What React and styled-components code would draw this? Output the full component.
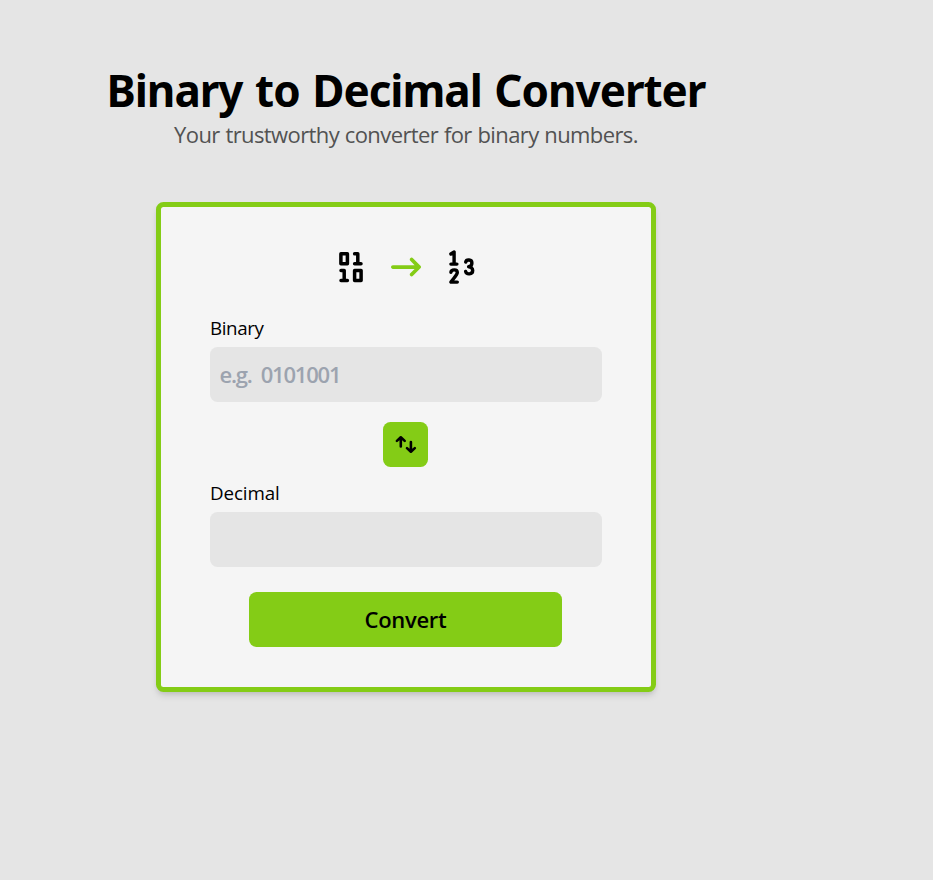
import React from "react";
import styled, { createGlobalStyle } from "styled-components";
import { FaArrowRightLong } from "react-icons/fa6";

const GlobalStyle = createGlobalStyle`
  *, *::before, *::after { box-sizing: border-box; }
  body { margin: 0; background: #e5e5e5; font-family: "Open Sans", "Noto Sans", sans-serif; }
`;

const Page = styled.main`
  width: 812px;
  min-height: 880px;
  padding-top: 63px;
  display: flex;
  flex-direction: column;
  align-items: center;
`;

const Title = styled.h1`
  margin: 0;
  font-family: "Noto Sans", sans-serif;
  font-size: 44px;
  line-height: 54px;
  font-weight: 700;
  letter-spacing: -1.03px;
  word-spacing: 2.2px;
  white-space: nowrap;
  color: #000;
`;

const Subtitle = styled.p`
  margin: 0;
  font-size: 22px;
  line-height: 35px;
  letter-spacing: -0.6px;
  word-spacing: 0.6px;
  white-space: nowrap;
  color: #525252;
`;

const Card = styled.form`
  width: 500px;
  height: 490px;
  margin-top: 50px;
  padding: 35px 50px 0 49px;
  display: flex;
  flex-direction: column;
  align-items: center;
  background: #f5f5f5;
  border: 5px solid #84cc16;
  border-radius: 7.5px;
  box-shadow: 0 5px 7.5px -1px rgba(0, 0, 0, 0.1), 0 2.5px 5px -2px rgba(0, 0, 0, 0.1);
`;

const IconRow = styled.div`
  height: 50px;
  display: flex;
  align-items: center;
  gap: 20px;
  margin-left: 1px;
  color: #000;
`;

const ConversionArrow = styled(FaArrowRightLong)`
  width: 30px;
  height: 30px;
  color: #84cc16;
`;

const Field = styled.div`
  width: 392px;
  display: flex;
  flex-direction: column;
  align-self: flex-start;
  margin-top: ${(p) => p.$top}px;
`;

const Label = styled.label`
  font-size: 18.75px;
  line-height: 30px;
  letter-spacing: ${(p) => p.$tracking}px;
  color: #000;
  margin-bottom: 4px;
`;

const Input = styled.input`
  width: 392px;
  height: 55px;
  padding: 0 9.5px 2px;
  border: 0;
  border-radius: 7.5px;
  outline: none;
  background: #e5e5e5;
  font: 600 22px "Open Sans", sans-serif;
  letter-spacing: -1.2px;
  word-spacing: 4.5px;
  &::placeholder { color: #9ca3af; opacity: 1; }
`;

const Button = styled.button`
  border: 0;
  padding: 0;
  border-radius: 7.5px;
  background: #84cc16;
  color: #000;
  display: flex;
  align-items: center;
  justify-content: center;
`;

const SwapButton = styled(Button)`
  width: 45px;
  height: 45px;
  margin-top: 20px;
`;

const ConvertButton = styled(Button)`
  width: 313px;
  height: 55px;
  margin-top: 25px;
  padding-bottom: 2px;
  font: 600 22px "Open Sans", sans-serif;
  letter-spacing: -0.3px;
`;

const BinaryIcon = () => (
  <svg width="40" height="40" viewBox="331 247 40 40" fill="none" stroke="currentColor" strokeWidth="3.5" strokeLinecap="round" strokeLinejoin="round">
    <rect x="340.9" y="253.8" width="6.5" height="9.9" />
    <path d="M354.6 253.8h3.2v9.9M354.6 263.7h6.4" />
    <path d="M341 270.5h3.2v9.9M341 280.4h6.4" />
    <rect x="354.6" y="270.5" width="6.5" height="9.9" />
  </svg>
);

const NumbersIcon = () => (
  <svg width="40" height="40" viewBox="441 247 40 40" fill="none" stroke="currentColor" strokeWidth="3.4" strokeLinecap="round" strokeLinejoin="round">
    <path d="M450.9 254l3.2-2v12.1M450.9 264.1h6" />
    <path d="M450.9 272.2c.5-3.1 6.4-3.2 6.4.2 0 2-1.5 3.2-6.4 9.7h6.4" />
    <path d="M465.7 262.1c.6-3 6.2-2.8 6.2.8 0 2.4-1.5 3.6-3.3 3.9 2.2 0 4.1 1.5 4.1 3.8 0 4-6.2 4.4-7.1.8" />
  </svg>
);

const SwapIcon = () => (
  <svg width="30" height="30" viewBox="390.6 430 30 30" fill="none" stroke="currentColor" strokeWidth="2.6" strokeLinecap="round" strokeLinejoin="round">
    <path d="M400.4 446.5v-9.2M396.5 440.9l3.9-3.6 3.9 3.6" />
    <path d="M410.5 442v9.6M406.6 448.1l3.9 3.6 3.9-3.6" />
  </svg>
);

export default function App() {
  return (
    <>
      <GlobalStyle />
      <Page>
        <Title>Binary to Decimal Converter</Title>
        <Subtitle>Your trustworthy converter for binary numbers.</Subtitle>
        <Card onSubmit={(e) => e.preventDefault()}>
          <IconRow>
            <BinaryIcon />
            <ConversionArrow />
            <NumbersIcon />
          </IconRow>
          <Field $top={21}>
            <Label htmlFor="binary" $tracking={-0.4}>Binary</Label>
            <Input id="binary" placeholder="e.g. 0101001" />
          </Field>
          <SwapButton type="button" aria-label="Swap">
            <SwapIcon />
          </SwapButton>
          <Field $top={11}>
            <Label htmlFor="decimal" $tracking={-0.1}>Decimal</Label>
            <Input id="decimal" readOnly />
          </Field>
          <ConvertButton type="submit">Convert</ConvertButton>
        </Card>
      </Page>
    </>
  );
}
